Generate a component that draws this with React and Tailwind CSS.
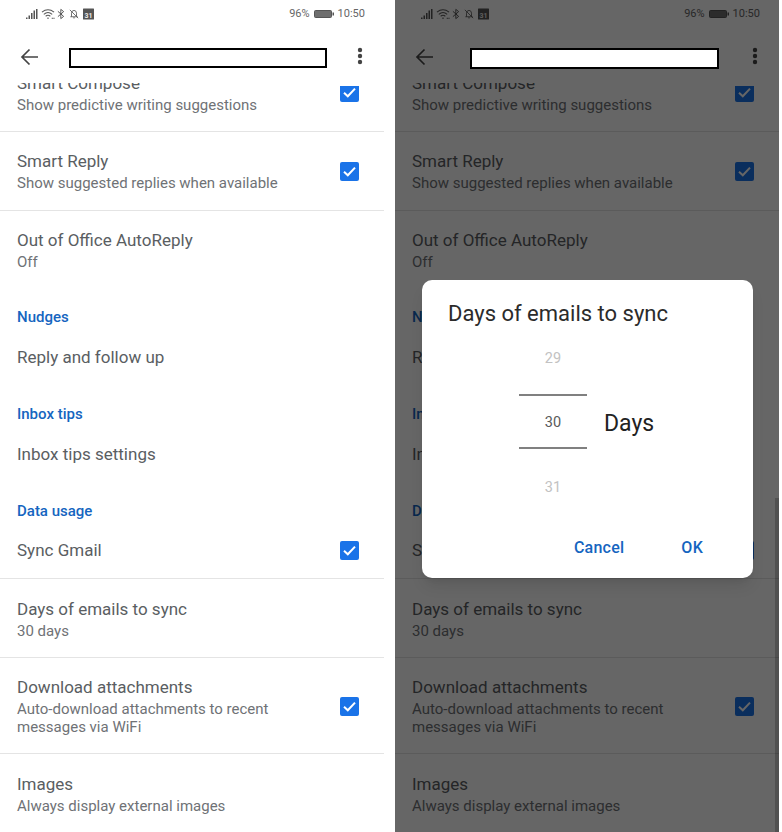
import React from "react";

const font = { fontFamily: "Roboto, sans-serif" };

function Signal() {
  return (
    <svg width="12" height="12" viewBox="0 0 12 12" fill="currentColor">
      <rect x="0" y="9.5" width="1.5" height="1.5" />
      <rect x="2.5" y="7.5" width="1.5" height="3.5" />
      <rect x="5" y="5" width="1.5" height="6" />
      <rect x="7.5" y="2.5" width="1.5" height="8.5" />
      <rect x="10" y="1" width="1.5" height="10" />
    </svg>
  );
}
function Wifi() {
  return (
    <svg width="14" height="12" viewBox="0 0 15 12" fill="none" stroke="currentColor" strokeWidth="1.1">
      <path d="M1 4 Q7.5 -1 14 4" />
      <path d="M3 6.3 Q7.5 2.6 12 6.3" />
      <path d="M5 8.4 Q7.5 6.4 10 8.4" />
      <rect x="6.8" y="9.8" width="1.4" height="1.4" fill="currentColor" stroke="none" />
      <rect x="11.5" y="10" width="1.2" height="1.2" fill="currentColor" stroke="none" />
      <rect x="13.3" y="10" width="1.2" height="1.2" fill="currentColor" stroke="none" />
    </svg>
  );
}
function Bluetooth() {
  return (
    <svg width="8" height="12" viewBox="0 0 9 12" fill="none" stroke="currentColor" strokeWidth="1.1">
      <path d="M1 3 L7.5 8.7 L4.3 11.2 V0.8 L7.5 3.3 L1 9" />
    </svg>
  );
}
function BellOff() {
  return (
    <svg width="10" height="12" viewBox="0 0 12 12" fill="none" stroke="currentColor" strokeWidth="1">
      <path d="M3 9.3 V5 Q3 2 6 1.6 Q9 2 9 5 V9.3 H1.6 M9 9.3 H10.4" />
      <path d="M5 10.6 H7" />
      <path d="M1 1 L11 11" />
    </svg>
  );
}
function Cal() {
  return (
    <svg width="11" height="12" viewBox="0 0 11 12">
      <rect x="0" y="0.5" width="11" height="11" rx="0.5" fill="currentColor" />
      <text x="5.5" y="10" textAnchor="middle" fontSize="7" fontWeight="700" fill="#e8e8e8" fontFamily="Roboto, sans-serif">31</text>
    </svg>
  );
}
function Battery() {
  return (
    <svg width="20" height="10" viewBox="0 0 20 10">
      <rect x="0.5" y="1.5" width="17" height="7" rx="1" fill="#6e6e6e" stroke="#555" />
      <rect x="18.5" y="3.5" width="1.5" height="3" fill="#555" />
    </svg>
  );
}
function Check({ cut }) {
  return cut ? (
    <span className="flex h-[16px] w-[19px] items-end justify-center overflow-hidden rounded-b-[2px] bg-[#1a73e8] pb-[2px]">
      <svg width="15" height="15" viewBox="0 0 15 15" fill="none" stroke="white" strokeWidth="2" className="shrink-0">
        <path d="M2 7.8 L5.8 11.3 L13 3.6" />
      </svg>
    </span>
  ) : (
    <span className="flex h-[19px] w-[19px] items-center justify-center rounded-[2px] bg-[#1a73e8]">
      <svg width="15" height="15" viewBox="0 0 15 15" fill="none" stroke="white" strokeWidth="2">
        <path d="M2 7.8 L5.8 11.3 L13 3.6" />
      </svg>
    </span>
  );
}

function Row({ title, sub, check, cut, line = true, h, flat, up }) {
  return (
    <div className={`flex items-center justify-between pl-[17px] pr-[25px] ${flat ? "" : "pt-[1px]"} ${line ? "border-b border-[#e4e4e4]" : ""} ${h}`}>
      <div className={up ? "-translate-y-px" : ""}>
        <div className="text-[17px] leading-[22px] text-[#5a5e62]">{title}</div>
        <div className="mt-[2px] text-[15px] leading-[18px] text-[#6f7276]">{sub}</div>
      </div>
      {check && <Check cut={cut} />}
    </div>
  );
}
function Section({ children, h }) {
  return <div className={`flex items-end pl-[17px] text-[15px] font-medium text-[#1565c0] ${h}`}>{children}</div>;
}
function Single({ children, h, check, line }) {
  return (
    <div className={`flex items-center justify-between pl-[17px] pr-[25px] text-[17px] text-[#5a5e62] ${line ? "border-b border-[#e4e4e4]" : ""} ${h}`}>
      <span className={check ? "pt-[1px]" : ""}>{children}</span>
      {check && <Check />}
    </div>
  );
}

function Screen({ boxClass }) {
  return (
    <div className="flex h-[832px] w-[384px] flex-col overflow-hidden bg-white">
      <div className="flex h-[27px] items-center justify-between pl-[26px] pr-[19px] text-[#555]">
        <div className="flex items-center">
          <Signal />
          <span className="ml-[3px] flex"><Wifi /></span>
          <span className="ml-[2px] flex"><Bluetooth /></span>
          <span className="ml-[4px] flex"><BellOff /></span>
          <span className="ml-[4px] flex"><Cal /></span>
        </div>
        <div className="flex items-center gap-[4px] pt-[1px] text-[11px] text-[#666]">
          <span>96%</span>
          <Battery />
          <span>10:50</span>
        </div>
      </div>
      <div className="flex h-[56px] items-start pl-[20px] pr-[21px] pt-[17px] text-[#444]">
        <svg width="20" height="20" viewBox="0 0 20 20" fill="none" stroke="currentColor" strokeWidth="1.7" className="mt-[3px]">
          <path d="M18 10 H2 M9.5 2.5 L2 10 L9.5 17.5" />
        </svg>
        <div className={`relative z-10 mt-[4px] border-2 border-black bg-white ${boxClass}`} />
        <svg width="6" height="18" viewBox="0 0 6 18" fill="currentColor" className="ml-auto mt-[3px]">
          <circle cx="3" cy="3" r="2.2" />
          <circle cx="3" cy="9" r="2.2" />
          <circle cx="3" cy="15" r="2.2" />
        </svg>
      </div>
      <div className="flex-1 overflow-hidden">
        <div className="-mt-[28px]">
          <Row title="Smart Compose" sub="Show predictive writing suggestions" check cut up h="h-[77px]" />
          <Row title="Smart Reply" sub="Show suggested replies when available" check up h="h-[79px]" />
          <Row title="Out of Office AutoReply" sub="Off" line={false} flat up h="h-[79px]" />
          <Section h="h-[38px]">Nudges</Section>
          <Single h="h-[60px]">Reply and follow up</Single>
          <Section h="h-[37px]">Inbox tips</Section>
          <Single h="h-[60px]">Inbox tips settings</Single>
          <Section h="h-[37px]">Data usage</Section>
          <Single h="h-[57px]" check line>Sync Gmail</Single>
          <Row title="Days of emails to sync" sub="30 days" h="h-[79px]" />
          <Row title="Download attachments" sub={<>Auto-download attachments to recent<br />messages via WiFi</>} check h="h-[96px]" />
          <Row title="Images" sub="Always display external images" line={false} flat h="h-[79px]" />
        </div>
      </div>
    </div>
  );
}

export default function App() {
  return (
    <div style={font} className="flex h-[832px] w-[782px] overflow-hidden bg-white">
      <div className="w-[395px]">
        <Screen boxClass="ml-[29px] h-[20px] w-[258px]" />
      </div>
      <div className="relative w-[384px]">
        <Screen boxClass="ml-[35px] h-[21px] w-[249px]" />
        <div className="absolute inset-0 z-[5] bg-black/60" />
        <div className="absolute right-0 top-[498px] z-[6] h-[334px] w-[4px] bg-black/20" />
        <div className="absolute left-[27px] top-[280px] z-20 flex h-[298px] w-[331px] flex-col rounded-[10px] bg-white shadow-lg">
          <div className="pl-[26px] pt-[19px] text-[22px] leading-[30px] text-[#2b2b2b]">Days of emails to sync</div>
          <div className="flex flex-1 pl-[97px]">
            <div className="flex w-[68px] flex-col items-center text-[14.5px]">
              <div className="flex h-[65px] items-center pb-[6px] text-[#c2c2c2]">29</div>
              <div className="flex h-[55px] w-full items-center justify-center border-y-2 border-[#808080] pt-[2px] text-[#5a5a5a]">30</div>
              <div className="flex h-[78px] items-center text-[#c2c2c2]">31</div>
            </div>
            <div className="ml-[17px] mt-[68px] flex h-[55px] items-center text-[23px] text-[#222]">Days</div>
          </div>
          <div className="flex justify-end gap-[57px] pb-[19px] pr-[50px] text-[16px] font-medium leading-[22px] tracking-[0.25px] text-[#1565c0]">
            <span>Cancel</span>
            <span>OK</span>
          </div>
        </div>
      </div>
    </div>
  );
}
